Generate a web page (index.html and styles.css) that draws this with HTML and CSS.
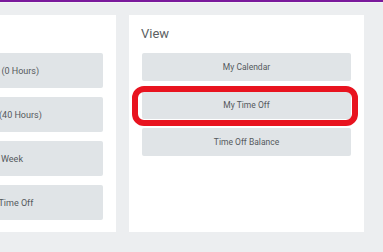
FILE: index.html
```html
<!DOCTYPE html>
<html>
<head>
<meta charset="utf-8">
<link rel="stylesheet" href="styles.css">
</head>
<body>
<div class="topbar"></div>
<div class="cards">
  <section class="card card-enter">
    <h2 class="card-title">Enter Time</h2>
    <div class="btn-list">
      <div class="btn">This Week (0 Hours)</div>
      <div class="btn">Last Week (40 Hours)</div>
      <div class="btn">Select Week</div>
      <div class="btn">Request Time Off</div>
    </div>
  </section>
  <section class="card card-view">
    <h2 class="card-title">View</h2>
    <div class="btn-list">
      <div class="btn">My Calendar</div>
      <div class="btn highlighted">My Time Off</div>
      <div class="btn">Time Off Balance</div>
    </div>
  </section>
</div>
</body>
</html>
```
FILE: styles.css
```css
html, body {
  margin: 0;
  padding: 0;
  background: #eceef0;
  font-family: Roboto, "Liberation Sans", sans-serif;
  overflow: hidden;
}
.topbar {
  height: 2px;
  background: #7a1a9c;
  border-bottom: 1px solid #f4f4f6;
}
.cards {
  display: flex;
  gap: 13px;
  margin-left: -119px;
  padding-top: 12px;
}
.card {
  width: 235px;
  height: 217px;
  box-sizing: border-box;
  background: #ffffff;
  padding: 10px 13px 13px;
}
.card-title {
  margin: 0 0 10px 0;
  line-height: 18px;
  font-size: 13px;
  font-weight: 400;
  color: #5c5f63;
  padding-left: 0;
}
.card-view .card-title { margin-left: -1px; }
.btn-list {
  display: flex;
  flex-direction: column;
}
.btn {
  position: relative;
  background: #e0e4e7;
  border-radius: 2px;
  color: #55595d;
  font-size: 8.5px;
  text-align: center;
  display: flex;
  align-items: center;
  justify-content: center;
}
.card-enter .btn-list { gap: 9px; }
.card-enter .btn { height: 35px; font-size: 9px; }
.card-view .btn-list { gap: 9.5px; }
.card-view .btn { height: 28px; }
.highlighted::after {
  content: "";
  position: absolute;
  left: -10px;
  right: -7px;
  top: -4.5px;
  bottom: -7.5px;
  border: 6px solid #e8131f;
  border-radius: 12px;
  box-sizing: border-box;
}
```
